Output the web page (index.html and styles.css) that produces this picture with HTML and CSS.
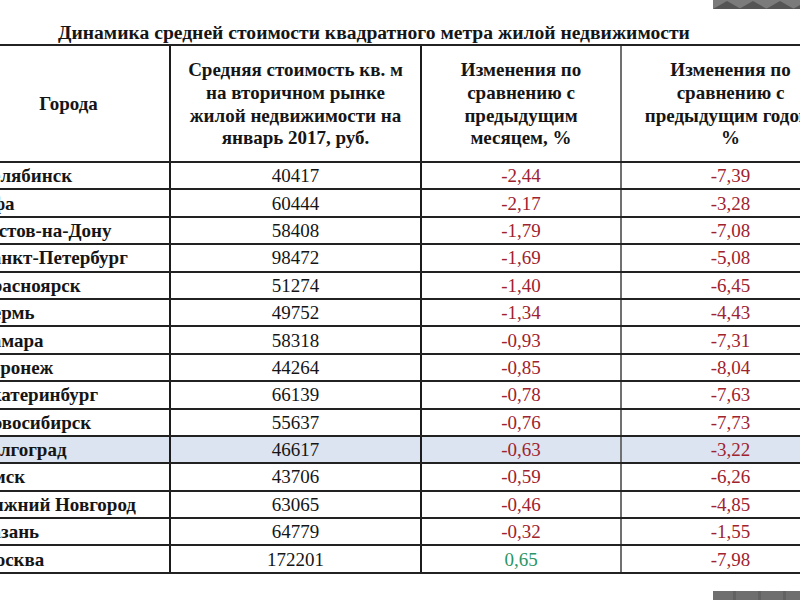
FILE: index.html
```html
<!DOCTYPE html>
<html lang="ru">
<head>
<meta charset="utf-8">
<title>Динамика средней стоимости квадратного метра жилой недвижимости</title>
<link rel="stylesheet" href="styles.css">
</head>
<body>
<div class="slide">
  <svg class="band band-top" width="87" height="9" viewBox="0 0 87 9" aria-hidden="true">
    <rect width="87" height="9" fill="#7b7b7b"/>
    <polygon points="0,9 14,1 28,9" fill="#555"/>
    <polygon points="26,9 40,1 54,9" fill="#555"/>
    <polygon points="53,9 67,1 81,9" fill="#555"/>
    <polygon points="80,9 87,5 87,9" fill="#555"/>
  </svg>
  <h1 class="title">Динамика средней стоимости квадратного метра жилой недвижимости</h1>
  <table class="grid">
    <colgroup>
      <col class="c-city"><col class="c-price"><col class="c-month"><col class="c-year">
    </colgroup>
    <thead>
      <tr>
        <th class="h-city">Города</th>
        <th>Средняя стоимость кв. м<br>на вторичном рынке<br>жилой недвижимости на<br>январь 2017, руб.</th>
        <th>Изменения по<br>сравнению с<br>предыдущим<br>месяцем, %</th>
        <th>Изменения по<br>сравнению с<br>предыдущим годом,<br>%</th>
      </tr>
    </thead>
    <tbody>
      <tr><td class="city">Челябинск</td><td>40417</td><td class="neg">-2,44</td><td class="neg">-7,39</td></tr>
      <tr><td class="city">Уфа</td><td>60444</td><td class="neg">-2,17</td><td class="neg">-3,28</td></tr>
      <tr><td class="city">Ростов-на-Дону</td><td>58408</td><td class="neg">-1,79</td><td class="neg">-7,08</td></tr>
      <tr><td class="city">Санкт-Петербург</td><td>98472</td><td class="neg">-1,69</td><td class="neg">-5,08</td></tr>
      <tr><td class="city">Красноярск</td><td>51274</td><td class="neg">-1,40</td><td class="neg">-6,45</td></tr>
      <tr><td class="city">Пермь</td><td>49752</td><td class="neg">-1,34</td><td class="neg">-4,43</td></tr>
      <tr><td class="city">Самара</td><td>58318</td><td class="neg">-0,93</td><td class="neg">-7,31</td></tr>
      <tr><td class="city">Воронеж</td><td>44264</td><td class="neg">-0,85</td><td class="neg">-8,04</td></tr>
      <tr><td class="city">Екатеринбург</td><td>66139</td><td class="neg">-0,78</td><td class="neg">-7,63</td></tr>
      <tr><td class="city">Новосибирск</td><td>55637</td><td class="neg">-0,76</td><td class="neg">-7,73</td></tr>
      <tr class="hl"><td class="city">Волгоград</td><td>46617</td><td class="neg">-0,63</td><td class="neg">-3,22</td></tr>
      <tr><td class="city">Омск</td><td>43706</td><td class="neg">-0,59</td><td class="neg">-6,26</td></tr>
      <tr><td class="city">Нижний Новгород</td><td>63065</td><td class="neg">-0,46</td><td class="neg">-4,85</td></tr>
      <tr><td class="city">Казань</td><td>64779</td><td class="neg">-0,32</td><td class="neg">-1,55</td></tr>
      <tr><td class="city">Москва</td><td>172201</td><td class="pos">0,65</td><td class="neg">-7,98</td></tr>
    </tbody>
  </table>
  <svg class="band band-bottom" width="87" height="9" viewBox="0 0 87 9" aria-hidden="true">
    <rect width="87" height="9" fill="#6f6f6f"/>
    <rect x="20" width="3" height="9" fill="#626262"/>
    <rect x="45" width="3" height="9" fill="#626262"/>
    <rect x="70" width="3" height="9" fill="#626262"/>
  </svg>
</div>
</body>
</html>
```

FILE: styles.css
```css
html, body {
  margin: 0;
  padding: 0;
  background: #ffffff;
}

body {
  width: 800px;
  height: 600px;
  overflow: hidden;
  font-family: "Liberation Serif", "Times New Roman", serif;
  color: #151515;
}

.slide {
  position: relative;
  width: 800px;
  height: 600px;
  overflow: hidden;
}

.band {
  position: absolute;
  right: 0;
  display: block;
}

.band-top { top: 0; }
.band-bottom { bottom: 0; }

.title {
  margin: 0;
  padding: 21px 0 0 58px;
  height: 23px;
  font-size: 19.6px;
  line-height: 23px;
  font-weight: bold;
  white-space: nowrap;
}

.grid {
  border-collapse: collapse;
  table-layout: fixed;
  width: 871px;
  margin-left: -32px;
}

.c-city { width: 202px; }
.c-price { width: 251px; }
.c-month { width: 200px; }
.c-year { width: 218px; }

.grid th,
.grid td {
  padding: 0;
  border-top: 2px solid #222;
  border-bottom: 2px solid #222;
  border-left: 2px solid #1c1c1c;
  text-align: center;
  white-space: nowrap;
  overflow: hidden;
}

.grid th:nth-child(4),
.grid td:nth-child(4) {
  border-left: 2px solid #707070;
}

.grid th:first-child,
.grid td:first-child {
  border-left: none;
}

.grid th {
  height: 113px;
  font-size: 19px;
  line-height: 22.7px;
  font-weight: bold;
  vertical-align: middle;
  padding-top: 2px;
}

.grid td {
  height: 25.4px;
  font-size: 19px;
  line-height: 25px;
}

.grid td.city {
  text-align: left;
  font-weight: bold;
  font-size: 19px;
  padding-left: 10px;
}

.grid td.neg { color: #a0222e; }
.grid td.pos { color: #2a9666; }

.grid tr.hl td {
  background: #dbe4f0;
}
```
